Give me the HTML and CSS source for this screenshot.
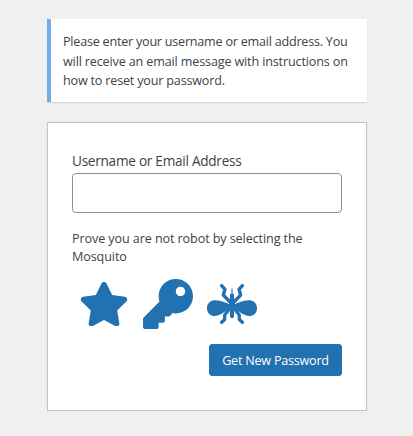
FILE: index.html
```
<!DOCTYPE html>
<html lang="en">
<head>
    <meta charset="UTF-8">
    <meta name="viewport" content="width=device-width, initial-scale=1.0">
    <title>Lost Password</title>
    <link rel="stylesheet" href="styles.css">
</head>
<body>
    <div id="login">
        <p class="message"><span class="line1">Please enter your username or email address. You</span><br><span class="line2">will receive an email message with instructions on</span><br><span class="line3">how to reset your password.</span></p>
        <form class="lostpassword" onsubmit="return false">
            <label class="user-label" for="user_login">Username or Email Address</label>
            <input class="user-input" type="text" id="user_login">
            <p class="captcha-text">Prove you are not robot by selecting the<br>Mosquito</p>
            <div class="captcha-icons">
                <svg class="icon" viewBox="0 0 576 512" width="50" height="44.4"><path d="M259.3 17.8L194 150.2 47.9 171.5c-26.2 3.8-36.7 36.1-17.7 54.6l105.7 103-25 145.5c-4.5 26.3 23.2 46 46.4 33.7L288 439.6l130.7 68.7c23.2 12.2 50.9-7.4 46.4-33.7l-25-145.5 105.7-103c19-18.5 8.5-50.8-17.7-54.6L382 150.2 316.7 17.8c-11.7-23.6-45.6-23.9-57.4 0z"/></svg>
                <svg class="icon" viewBox="0 0 512 512" width="50" height="50"><path d="M512 176.001C512 273.203 433.202 352 336 352c-11.22 0-22.19-1.062-32.827-3.069l-24.012 27.014A23.999 23.999 0 0 1 261.223 384H224v40c0 13.255-10.745 24-24 24h-40v40c0 13.255-10.745 24-24 24H24c-13.255 0-24-10.745-24-24v-78.059c0-6.365 2.529-12.47 7.029-16.971l161.802-161.802C163.108 213.814 160 195.271 160 176 160 78.798 238.797.001 335.999 0 433.488-.001 512 78.511 512 176.001zM336 128c0 26.51 21.49 48 48 48s48-21.49 48-48-21.49-48-48-48-48 21.49-48 48z"/></svg>
                <svg class="icon" viewBox="0 0 50 40" width="50" height="40">
                    <!-- wings -->
                    <path d="M24 21C18 17.800 12 16.200 7.500 16.300C3 16.500 0 19.800 0 24.200C0 29 3.400 32 7.600 31.900C13 31.800 19 27.500 24 21.500zM26 21C32 17.800 38 16.200 42.500 16.300C47 16.500 50 19.800 50 24.200C50 29 46.600 32 42.400 31.900C37 31.800 31 27.500 26 21.500z"/>
                    <!-- body -->
                    <path d="M24.400 4.500h1.200v5.500h1.400v4.500l1 1.500v7l-1 1.500v8.500l-1 1h-2l-1-1v-8.500l-1-1.500v-7l1-1.500V10h1.400z"/>
                    <!-- legs -->
                    <path class="legs" d="M14.700 1.700L18 5.300L16.300 11L23.500 18.500M35.300 1.700L32 5.300L33.700 11L26.500 18.500M14.700 38.300L17.700 35.500V31L23.500 23.500M35.300 38.300L32.300 35.500V31L26.500 23.500"/>
                </svg>
            </div>
            <div class="submit">
                <button class="button-primary" type="submit">Get New Password</button>
            </div>
        </form>
    </div>
</body>
</html>
```
FILE: styles.css
```
* { box-sizing: border-box; }
body { background: #f0f0f0; margin: 0; color: #3c434a; font-family: "Open Sans", "Noto Sans", sans-serif; font-size: 12.6px; overflow: hidden; }
#login { width: 320px; margin: 19px 0 0 47px; }
p { margin: 0; }
.message { height: 83px; padding: 13px 12px 11px; border-left: 4px solid #72aee6; background: #fff; box-shadow: 0 1px 1px rgba(0,0,0,.1); line-height: 19.5px; white-space: nowrap; }
.line1 { letter-spacing: -0.23px; }
.line2 { letter-spacing: -0.15px; }
.line3 { letter-spacing: -0.19px; }
.lostpassword { display: flex; flex-direction: column; height: 289px; margin-top: 20px; padding: 27px 24px 0; background: #fff; border: 1px solid #c3c4c7; box-shadow: 0 1px 3px rgba(0,0,0,.04); }
.user-label { font-size: 13.6px; line-height: 21px; height: 23px; letter-spacing: -0.26px; white-space: nowrap; }
.user-input { width: 270px; height: 40px; padding: 3px 5px; border: 1px solid #8c8f94; border-radius: 4px; background: #fff; font-size: 24px; outline: none; }
.captcha-text { margin-top: 17px; line-height: 18px; height: 36px; white-space: nowrap; letter-spacing: -0.1px; }
.captcha-icons { display: flex; align-items: center; gap: 14px; height: 50px; margin-top: 13px; padding-left: 7px; }
.icon { display: block; fill: #2271b1; }
.legs { fill: none; stroke: #2271b1; stroke-width: 3.3; stroke-linecap: round; stroke-linejoin: round; }
.submit { display: flex; justify-content: flex-end; margin-top: 15px; }
.button-primary { width: 133px; height: 32px; padding: 2px 0 0; border: 1px solid #2271b1; border-radius: 3px; background: #2271b1; color: #fff; font-family: inherit; font-size: 12.6px; line-height: 28px; letter-spacing: -0.23px; white-space: nowrap; }
```
